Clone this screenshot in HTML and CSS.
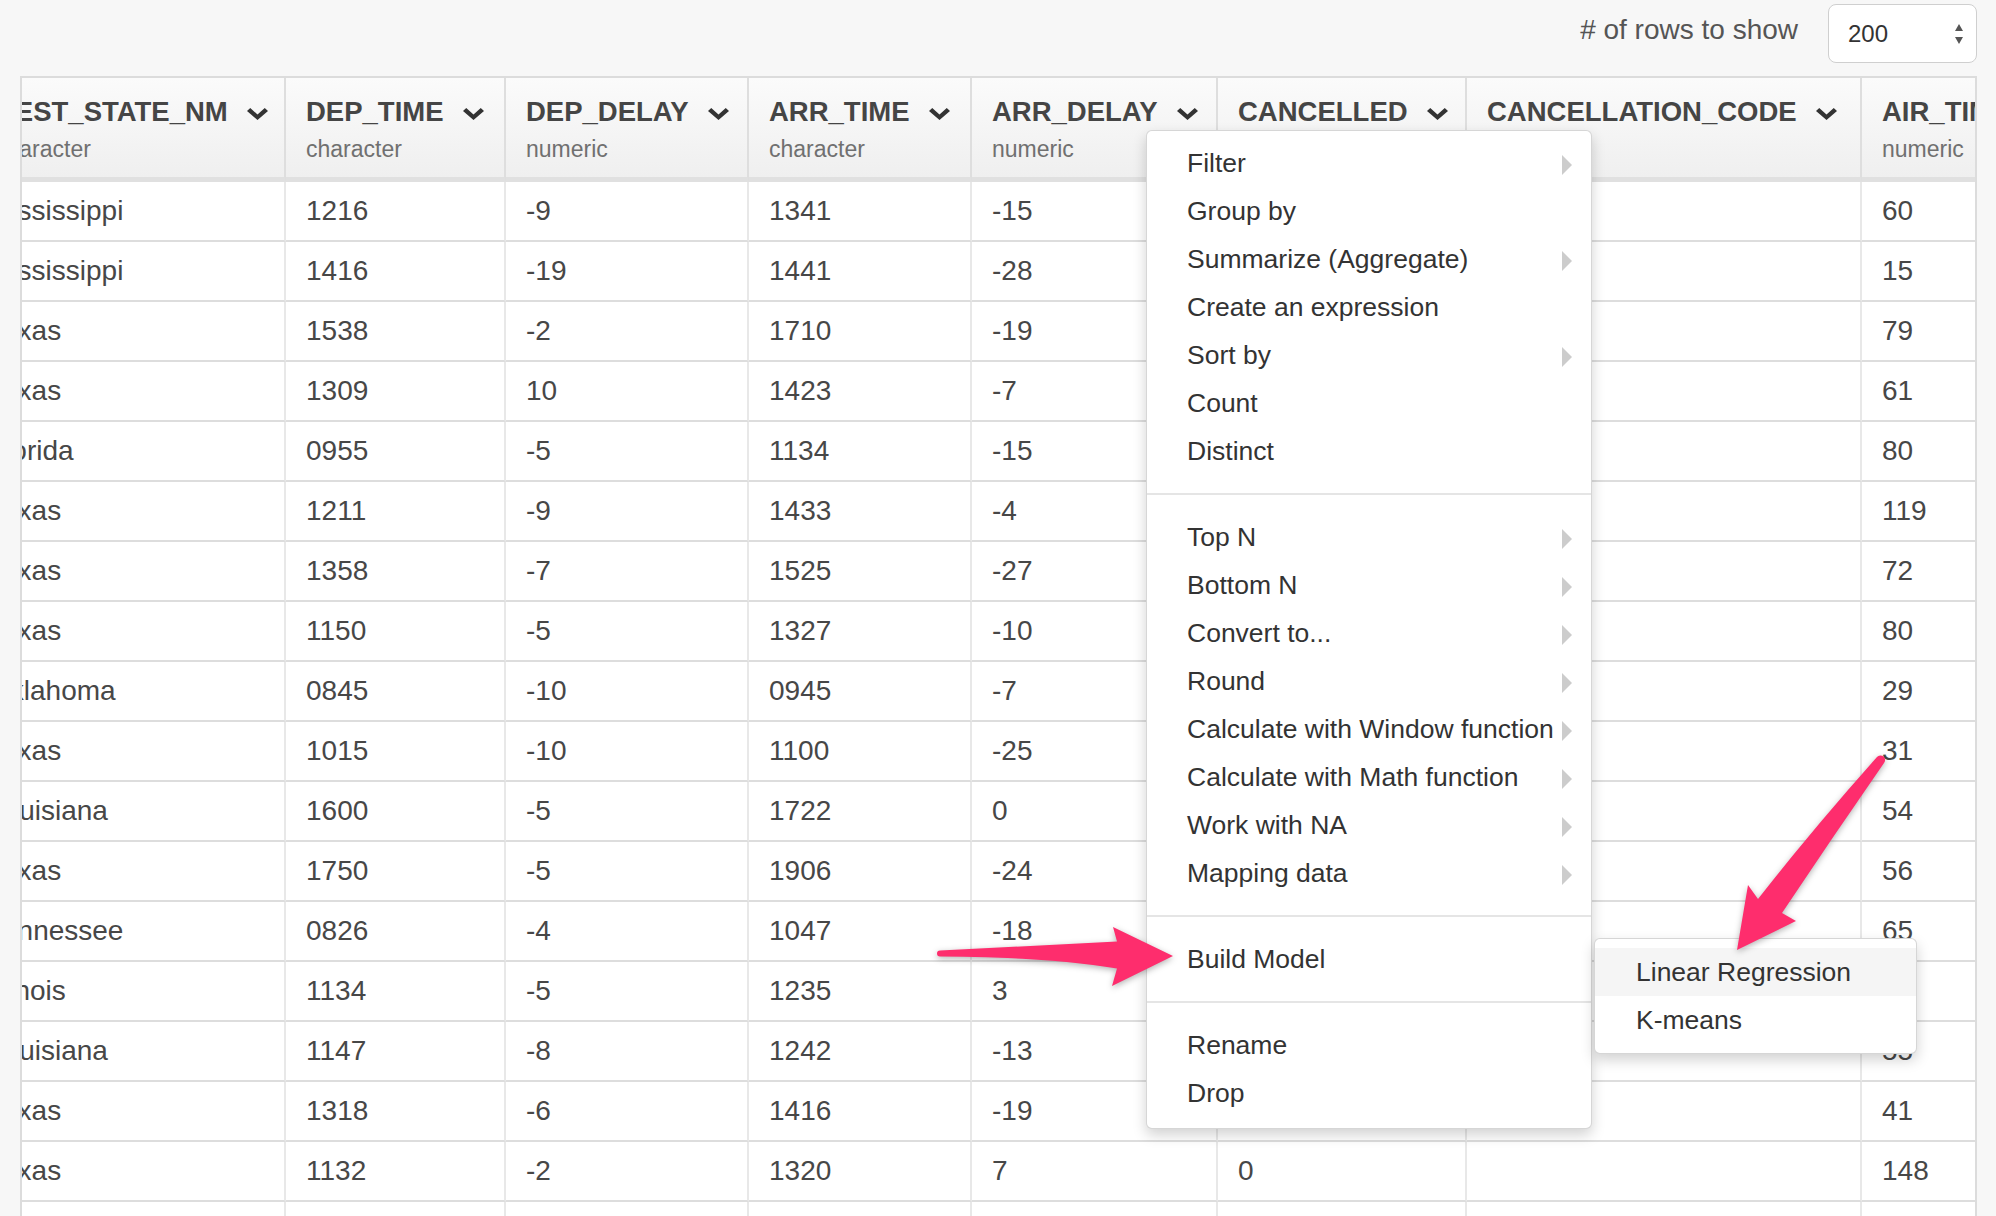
FILE: index.html
```html
<!DOCTYPE html>
<html lang="en">
<head>
<meta charset="utf-8">
<title>Data table</title>
<link rel="stylesheet" href="styles.css">
</head>
<body>
<div class="page">
  <div class="topbar">
    <span class="rows-label"># of rows to show</span>
    <div class="select">
      <span class="select-value">200</span>
      <svg class="updown" viewBox="0 0 8 20" width="8" height="20"><path d="M4 0 L8 7 L0 7 Z M4 20 L8 13 L0 13 Z"/></svg>
    </div>
  </div>

  <div class="table-wrap">
    <div class="grid">
      <div class="row hrow">
        <div class="hcell"><div class="hname">DEST_STATE_NM<svg class="chev" viewBox="0 0 22 14" preserveAspectRatio="none"><path d="M0 3.4 L3.4 0 L11 7.6 L18.6 0 L22 3.4 L11 14 Z"/></svg></div><div class="htype">character</div></div>
        <div class="hcell"><div class="hname">DEP_TIME<svg class="chev" viewBox="0 0 22 14" preserveAspectRatio="none"><path d="M0 3.4 L3.4 0 L11 7.6 L18.6 0 L22 3.4 L11 14 Z"/></svg></div><div class="htype">character</div></div>
        <div class="hcell"><div class="hname">DEP_DELAY<svg class="chev" viewBox="0 0 22 14" preserveAspectRatio="none"><path d="M0 3.4 L3.4 0 L11 7.6 L18.6 0 L22 3.4 L11 14 Z"/></svg></div><div class="htype">numeric</div></div>
        <div class="hcell"><div class="hname">ARR_TIME<svg class="chev" viewBox="0 0 22 14" preserveAspectRatio="none"><path d="M0 3.4 L3.4 0 L11 7.6 L18.6 0 L22 3.4 L11 14 Z"/></svg></div><div class="htype">character</div></div>
        <div class="hcell"><div class="hname">ARR_DELAY<svg class="chev" viewBox="0 0 22 14" preserveAspectRatio="none"><path d="M0 3.4 L3.4 0 L11 7.6 L18.6 0 L22 3.4 L11 14 Z"/></svg></div><div class="htype">numeric</div></div>
        <div class="hcell"><div class="hname">CANCELLED<svg class="chev" viewBox="0 0 22 14" preserveAspectRatio="none"><path d="M0 3.4 L3.4 0 L11 7.6 L18.6 0 L22 3.4 L11 14 Z"/></svg></div><div class="htype">numeric</div></div>
        <div class="hcell"><div class="hname">CANCELLATION_CODE<svg class="chev" viewBox="0 0 22 14" preserveAspectRatio="none"><path d="M0 3.4 L3.4 0 L11 7.6 L18.6 0 L22 3.4 L11 14 Z"/></svg></div><div class="htype">character</div></div>
        <div class="hcell"><div class="hname">AIR_TIME<svg class="chev" viewBox="0 0 22 14" preserveAspectRatio="none"><path d="M0 3.4 L3.4 0 L11 7.6 L18.6 0 L22 3.4 L11 14 Z"/></svg></div><div class="htype">numeric</div></div>
      </div>

      <div class="row"><div class="cell">Mississippi</div><div class="cell">1216</div><div class="cell">-9</div><div class="cell">1341</div><div class="cell">-15</div><div class="cell">0</div><div class="cell"></div><div class="cell">60</div></div>
      <div class="row"><div class="cell">Mississippi</div><div class="cell">1416</div><div class="cell">-19</div><div class="cell">1441</div><div class="cell">-28</div><div class="cell">0</div><div class="cell"></div><div class="cell">15</div></div>
      <div class="row"><div class="cell">Texas</div><div class="cell">1538</div><div class="cell">-2</div><div class="cell">1710</div><div class="cell">-19</div><div class="cell">0</div><div class="cell"></div><div class="cell">79</div></div>
      <div class="row"><div class="cell">Texas</div><div class="cell">1309</div><div class="cell">10</div><div class="cell">1423</div><div class="cell">-7</div><div class="cell">0</div><div class="cell"></div><div class="cell">61</div></div>
      <div class="row"><div class="cell">Florida</div><div class="cell">0955</div><div class="cell">-5</div><div class="cell">1134</div><div class="cell">-15</div><div class="cell">0</div><div class="cell"></div><div class="cell">80</div></div>
      <div class="row"><div class="cell">Texas</div><div class="cell">1211</div><div class="cell">-9</div><div class="cell">1433</div><div class="cell">-4</div><div class="cell">0</div><div class="cell"></div><div class="cell">119</div></div>
      <div class="row"><div class="cell">Texas</div><div class="cell">1358</div><div class="cell">-7</div><div class="cell">1525</div><div class="cell">-27</div><div class="cell">0</div><div class="cell"></div><div class="cell">72</div></div>
      <div class="row"><div class="cell">Texas</div><div class="cell">1150</div><div class="cell">-5</div><div class="cell">1327</div><div class="cell">-10</div><div class="cell">0</div><div class="cell"></div><div class="cell">80</div></div>
      <div class="row"><div class="cell">Oklahoma</div><div class="cell">0845</div><div class="cell">-10</div><div class="cell">0945</div><div class="cell">-7</div><div class="cell">0</div><div class="cell"></div><div class="cell">29</div></div>
      <div class="row"><div class="cell">Texas</div><div class="cell">1015</div><div class="cell">-10</div><div class="cell">1100</div><div class="cell">-25</div><div class="cell">0</div><div class="cell"></div><div class="cell">31</div></div>
      <div class="row"><div class="cell">Louisiana</div><div class="cell">1600</div><div class="cell">-5</div><div class="cell">1722</div><div class="cell">0</div><div class="cell">0</div><div class="cell"></div><div class="cell">54</div></div>
      <div class="row"><div class="cell">Texas</div><div class="cell">1750</div><div class="cell">-5</div><div class="cell">1906</div><div class="cell">-24</div><div class="cell">0</div><div class="cell"></div><div class="cell">56</div></div>
      <div class="row"><div class="cell">Tennessee</div><div class="cell">0826</div><div class="cell">-4</div><div class="cell">1047</div><div class="cell">-18</div><div class="cell">0</div><div class="cell"></div><div class="cell">65</div></div>
      <div class="row"><div class="cell">Illinois</div><div class="cell">1134</div><div class="cell">-5</div><div class="cell">1235</div><div class="cell">3</div><div class="cell">0</div><div class="cell"></div><div class="cell">64</div></div>
      <div class="row"><div class="cell">Louisiana</div><div class="cell">1147</div><div class="cell">-8</div><div class="cell">1242</div><div class="cell">-13</div><div class="cell">0</div><div class="cell"></div><div class="cell">55</div></div>
      <div class="row"><div class="cell">Texas</div><div class="cell">1318</div><div class="cell">-6</div><div class="cell">1416</div><div class="cell">-19</div><div class="cell">0</div><div class="cell"></div><div class="cell">41</div></div>
      <div class="row"><div class="cell">Texas</div><div class="cell">1132</div><div class="cell">-2</div><div class="cell">1320</div><div class="cell">7</div><div class="cell">0</div><div class="cell"></div><div class="cell">148</div></div>
      <div class="row"><div class="cell">Texas</div><div class="cell">1402</div><div class="cell">-3</div><div class="cell">1530</div><div class="cell">-5</div><div class="cell">0</div><div class="cell"></div><div class="cell">74</div></div>
    </div>
  </div>

  <ul class="menu">
    <li class="mi sub">Filter</li>
    <li class="mi">Group by</li>
    <li class="mi sub">Summarize (Aggregate)</li>
    <li class="mi">Create an expression</li>
    <li class="mi sub">Sort by</li>
    <li class="mi">Count</li>
    <li class="mi">Distinct</li>
    <li class="divider"></li>
    <li class="mi sub">Top N</li>
    <li class="mi sub">Bottom N</li>
    <li class="mi sub">Convert to...</li>
    <li class="mi sub">Round</li>
    <li class="mi sub">Calculate with Window function</li>
    <li class="mi sub">Calculate with Math function</li>
    <li class="mi sub">Work with NA</li>
    <li class="mi sub">Mapping data</li>
    <li class="divider"></li>
    <li class="mi">Build Model</li>
    <li class="divider"></li>
    <li class="mi">Rename</li>
    <li class="mi">Drop</li>
  </ul>

  <ul class="submenu">
    <li class="si active">Linear Regression</li>
    <li class="si">K-means</li>
  </ul>

  <svg class="arrows" viewBox="0 0 1996 1216" width="1996" height="1216">
    <path class="arrow" d="M940 950.5 L1117 941.5 L1113 927 L1173 956 L1112 986 L1117 968.5 Q1050 957 940 956.5 A3 3 0 0 1 940 950.5 Z"/>
    <path class="arrow" d="M1877 757 Q1812 830 1758 899 L1748 885 L1737 950 L1796 921 L1782 913 Q1832 838 1884 763 A4.6 4.6 0 0 0 1877 757 Z"/>
  </svg>
</div>
</body>
</html>
```

FILE: styles.css
```css
html, body {
  margin: 0;
  padding: 0;
}

body {
  width: 1996px;
  height: 1216px;
  overflow: hidden;
  background: #f7f7f7;
  font-family: "Liberation Sans", Arial, sans-serif;
  color: #444;
}

.page {
  position: relative;
  width: 1996px;
  height: 1216px;
}

/* top bar */
.topbar {
  display: flex;
  justify-content: flex-end;
  align-items: center;
  height: 67px;
  padding-right: 19px;
}

.rows-label {
  font-size: 28px;
  color: #555;
  margin-right: 30px;
  padding-bottom: 7px;
}

.select {
  box-sizing: border-box;
  width: 149px;
  height: 59px;
  display: flex;
  align-items: center;
  justify-content: space-between;
  padding: 0 13px 0 19px;
  background: #fff;
  border: 1.5px solid #cfcfcf;
  border-radius: 8px;
  font-size: 24px;
  color: #333;
}

.updown {
  fill: #555;
}

/* table */
.table-wrap {
  margin-top: 9px;
  margin-left: 20px;
  width: 1953px;
  height: 1200px;
  overflow: hidden;
  border-top: 2px solid #dcdcdc;
  border-left: 2px solid #dcdcdc;
  border-right: 2px solid #dcdcdc;
  background: #fff;
}

.grid {
  margin-left: -47px;
}

.row {
  display: grid;
  grid-template-columns: 311px 220px 243px 223px 246px 249px 395px 200px;
}

.hcell {
  box-sizing: border-box;
  height: 104px;
  padding: 19px 0 0 20px;
  border-right: 2px solid #dedede;
  border-bottom: 5px solid #e0e0e0;
  background: linear-gradient(#fbfbfb, #efefef);
  white-space: nowrap;
  overflow: hidden;
}

.hname {
  display: flex;
  align-items: center;
  gap: 19px;
  height: 30px;
  font-size: 27.5px;
  font-weight: bold;
  color: #454545;
}

.chev {
  width: 21px;
  height: 12px;
  margin-top: 4px;
  fill: #333;
  flex: none;
}

.htype {
  margin-top: 9px;
  height: 26px;
  line-height: 26px;
  font-size: 23px;
  color: #707070;
}

.cell {
  box-sizing: border-box;
  height: 60px;
  padding-left: 20px;
  line-height: 58px;
  font-size: 28px;
  color: #474747;
  border-right: 2px solid #e8e8e8;
  border-bottom: 2px solid #dddddd;
  white-space: nowrap;
  overflow: hidden;
}

.row .cell:first-child {
  padding-left: 13px;
}

/* dropdown menu */
.menu, .submenu {
  position: absolute;
  box-sizing: border-box;
  margin: 0;
  list-style: none;
  background: #fff;
  border: 1px solid rgba(0, 0, 0, 0.16);
  border-radius: 6px;
  box-shadow: 0 6px 14px rgba(0, 0, 0, 0.18);
  z-index: 5;
}

.menu {
  left: 1146px;
  top: 130px;
  width: 446px;
  padding: 8px 0 11px;
}

.mi {
  position: relative;
  height: 48px;
  line-height: 48px;
  padding-left: 40px;
  font-size: 26.5px;
  color: #333;
  white-space: nowrap;
}

.mi.sub::after {
  content: "";
  position: absolute;
  right: 19px;
  top: 50%;
  margin-top: -8px;
  border-left: 10px solid #cccccc;
  border-top: 10px solid transparent;
  border-bottom: 10px solid transparent;
}

.divider {
  height: 2px;
  margin: 18px 0;
  background: #e5e5e5;
}

.submenu {
  left: 1594px;
  top: 938px;
  width: 323px;
  padding: 9px 0;
}

.si {
  height: 48px;
  line-height: 48px;
  padding-left: 41px;
  font-size: 26.5px;
  color: #333;
  white-space: nowrap;
}

.si.active {
  background: #f5f5f5;
}

/* annotation arrows */
.arrows {
  position: absolute;
  left: 0;
  top: 0;
  z-index: 10;
  pointer-events: none;
  overflow: visible;
}

.arrow {
  fill: #fe2d6d;
  filter: drop-shadow(0 2px 3px rgba(0, 0, 0, 0.3));
}
```
